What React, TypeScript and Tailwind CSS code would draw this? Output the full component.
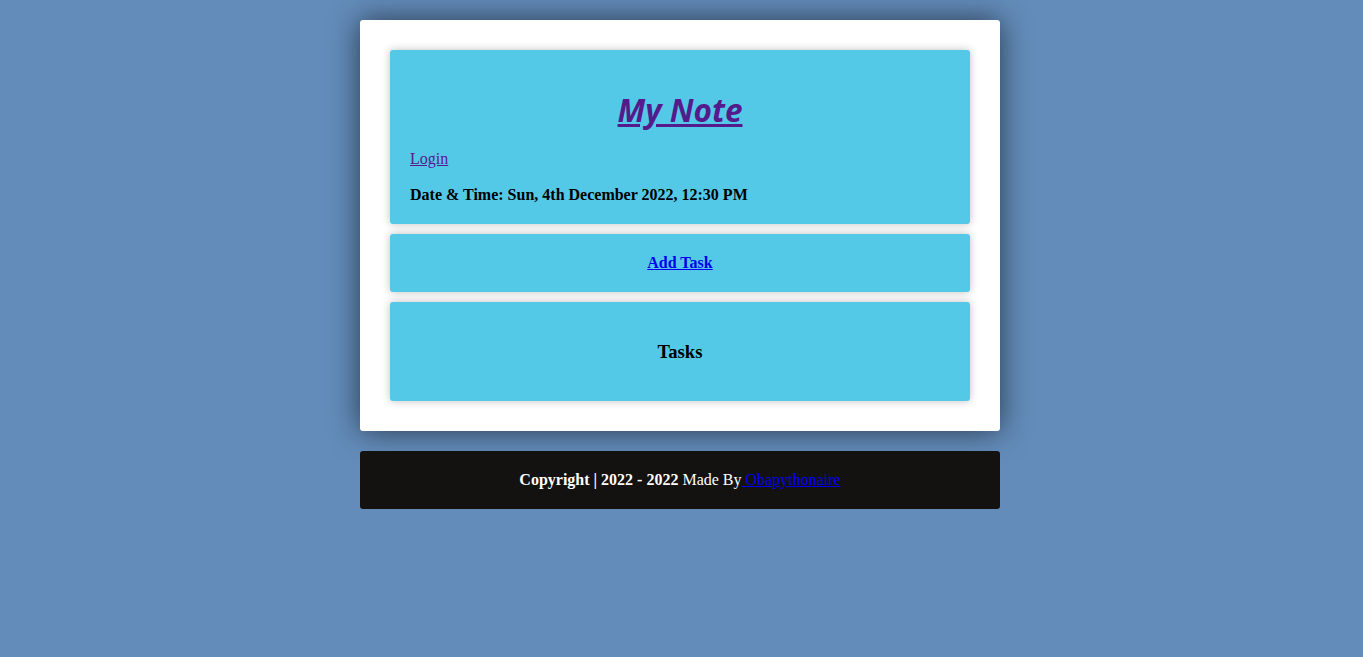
export default function App() {
  return (
    <div className="min-h-[657px] w-full bg-[#638cba] pt-5 pr-[3px] font-['Liberation_Serif',serif] text-black">
      <div className="mx-auto w-[640px] rounded-[3px] bg-white p-[30px] shadow-[0_0_30px_rgba(0,0,0,0.6)]">
        <div className="flex flex-col rounded-[3px] bg-[#54c9e7] px-5 pt-[41px] pb-5 shadow-[0_0_8px_rgba(0,0,0,0.25)]">
          <h1 className="text-center font-['Open_Sans',sans-serif] text-[31.5px] leading-[37px] font-bold italic">
            <a href="#" className="text-[#551a8b] underline">My Note</a>
          </h1>
          <a href="#" className="mt-[22px] self-start text-base leading-[18px] text-[#551a8b] underline">Login</a>
          <p className="mt-[18px] text-base leading-[18px] font-bold">Date &amp; Time: Sun, 4th December 2022, 12:30 PM</p>
        </div>
        <div className="mt-[10px] flex h-[58px] items-center justify-center rounded-[3px] bg-[#54c9e7] shadow-[0_0_8px_rgba(0,0,0,0.25)]">
          <a href="#" className="text-base leading-[18px] font-bold text-[#0000ee] underline">Add Task</a>
        </div>
        <div className="mt-[10px] flex h-[99px] items-center justify-center rounded-[3px] bg-[#54c9e7] shadow-[0_0_8px_rgba(0,0,0,0.25)]">
          <h3 className="text-[18.72px] leading-[22px] font-bold">Tasks</h3>
        </div>
      </div>
      <footer className="mx-auto mt-5 flex h-[58px] w-[640px] items-center justify-center rounded-[3px] bg-[#141211] text-base text-white">
        <p>
          <b>Copyright | 2022 - 2022</b> Made By<a href="#" className="text-[#0000ee] underline"> Obapythonaire</a>
        </p>
      </footer>
    </div>
  );
}
